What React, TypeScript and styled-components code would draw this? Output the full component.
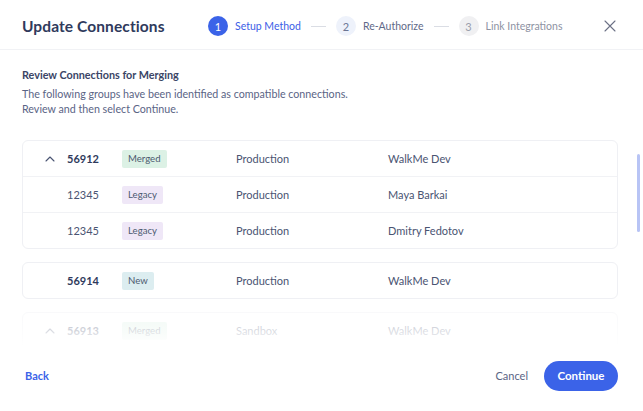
import React from 'react';
import styled, { createGlobalStyle } from 'styled-components';

const GlobalStyle = createGlobalStyle`
  html, body {
    margin: 0;
    padding: 0;
    background: #ffffff;
  }
  body {
    font-family: 'Lato', 'Open Sans', sans-serif;
    -webkit-font-smoothing: antialiased;
  }
`;

const Modal = styled.div`
  width: 643px;
  height: 411px;
  background: #ffffff;
  display: flex;
  flex-direction: column;
  overflow: hidden;
  position: relative;
`;

const Header = styled.header`
  height: 50px;
  padding: 3px 22px 0 22px;
  box-sizing: border-box;
  display: flex;
  align-items: center;
  border-bottom: 1px solid #f1f2f5;
`;

const Title = styled.h1`
  margin: 0;
  font-family: 'Lato', sans-serif;
  font-size: 15.5px;
  font-weight: 700;
  color: #2f3a5c;
  letter-spacing: 0.1px;
  width: 186px;
`;

const Stepper = styled.div`
  display: flex;
  align-items: center;
  flex: 1;
`;

const Step = styled.div`
  display: flex;
  align-items: center;
  gap: 7px;
`;

type StepState = 'active' | 'next' | 'todo';

const StepCircle = styled.span<{ $state: StepState }>`
  width: 20px;
  height: 20px;
  border-radius: 50%;
  display: flex;
  align-items: center;
  justify-content: center;
  font-size: 11px;
  background: ${p =>
    p.$state === 'active' ? '#3b63e8' : p.$state === 'next' ? '#eef2fb' : '#f0f0f2'};
  color: ${p =>
    p.$state === 'active' ? '#ffffff' : p.$state === 'next' ? '#6b7594' : '#9a9eac'};
`;

const StepLabel = styled.span<{ $state: StepState }>`
  font-size: 10.5px;
  color: ${p =>
    p.$state === 'active' ? '#3b5ee6' : p.$state === 'next' ? '#5f6988' : '#8e93a3'};
`;

const StepLine = styled.span`
  width: 15px;
  height: 1px;
  background: #dadde4;
  margin: 0 10px;
`;

const CloseButton = styled.button`
  border: none;
  background: none;
  padding: 0;
  width: 14px;
  height: 14px;
  display: flex;
  align-items: center;
  justify-content: center;
  color: #6b7085;
  margin-right: 4px;
  cursor: pointer;
`;

const Intro = styled.div`
  padding: 18px 22px 0 22px;
`;

const IntroTitle = styled.div`
  font-size: 10.8px;
  line-height: 14px;
  font-weight: 700;
  color: #3a4566;
  margin-bottom: 4px;
`;

const IntroText = styled.p`
  margin: 0;
  font-size: 10.7px;
  line-height: 15px;
  color: #5a6485;
`;

const ScrollArea = styled.div`
  position: relative;
  flex: 1;
  overflow: hidden;
  padding: 24px 25px 0 22px;
  display: flex;
  flex-direction: column;
  gap: 13px;

  &::after {
    content: '';
    position: absolute;
    left: 0;
    right: 0;
    bottom: 0;
    height: 48px;
    background: linear-gradient(
      rgba(255, 255, 255, 0) 0%,
      rgba(255, 255, 255, 0.6) 25%,
      rgba(255, 255, 255, 0.8) 70%,
      #ffffff 100%
    );
    pointer-events: none;
  }
`;

const ScrollThumb = styled.div`
  position: absolute;
  right: 3px;
  top: 38px;
  width: 3px;
  height: 78px;
  border-radius: 2px;
  background: #b8c4f5;
`;

const Group = styled.div`
  border: 1px solid #eff0f4;
  border-radius: 6px;
  flex-shrink: 0;
`;

const Row = styled.div`
  display: grid;
  grid-template-columns: 44px 55px 114px 152px 1fr;
  align-items: center;
  height: 35px;
  & + & {
    border-top: 1px solid #f1f2f5;
  }
`;

const Chevron = styled.span`
  padding-left: 22px;
  display: flex;
  align-items: center;
  color: #4a5472;
`;

const Id = styled.span<{ $bold?: boolean }>`
  font-size: 11px;
  font-weight: ${p => (p.$bold ? 700 : 400)};
  color: ${p => (p.$bold ? '#2f3a5c' : '#4a5472')};
`;

const badgeColors: Record<string, string> = {
  Merged: '#dcf1e5',
  Legacy: '#efe7f7',
  New: '#dcedf0',
};

const Badge = styled.span<{ $kind: string }>`
  justify-self: start;
  height: 18px;
  line-height: 18px;
  padding: 0 6px;
  border-radius: 2px;
  font-size: 9.6px;
  color: #4c5a70;
  background: ${p => badgeColors[p.$kind]};
`;

const Cell = styled.span`
  font-size: 11px;
  color: #4a5472;
`;

const Footer = styled.footer`
  height: 65px;
  flex-shrink: 0;
  display: flex;
  align-items: center;
  padding: 0 25px 6px 25px;
  box-sizing: border-box;
`;

const LinkButton = styled.button<{ $tone: 'primary' | 'muted' }>`
  border: none;
  background: none;
  padding: 0;
  font-family: inherit;
  font-size: 11px;
  font-weight: ${p => (p.$tone === 'primary' ? 700 : 400)};
  color: ${p => (p.$tone === 'primary' ? '#3b63e8' : '#5a6485')};
  cursor: pointer;
`;

const Spacer = styled.div`
  flex: 1;
`;

const PrimaryButton = styled.button`
  border: none;
  margin-left: 16px;
  height: 30px;
  width: 74px;
  border-radius: 15px;
  background: #3b63e8;
  color: #ffffff;
  font-family: inherit;
  font-size: 11.5px;
  font-weight: 700;
  cursor: pointer;
`;

type Conn = { id: string; status: string; env: string; owner: string };
type Item = Conn & { expanded?: boolean; children?: Conn[] };

// the last group is expanded but its members sit below the fold
const groups: Item[] = [
  {
    id: '56912',
    status: 'Merged',
    env: 'Production',
    owner: 'WalkMe Dev',
    expanded: true,
    children: [
      { id: '12345', status: 'Legacy', env: 'Production', owner: 'Maya Barkai' },
      { id: '12345', status: 'Legacy', env: 'Production', owner: 'Dmitry Fedotov' },
    ],
  },
  { id: '56914', status: 'New', env: 'Production', owner: 'WalkMe Dev' },
  { id: '56913', status: 'Merged', env: 'Sandbox', owner: 'WalkMe Dev', expanded: true },
];

const steps: { n: number; label: string; state: StepState }[] = [
  { n: 1, label: 'Setup Method', state: 'active' },
  { n: 2, label: 'Re-Authorize', state: 'next' },
  { n: 3, label: 'Link Integrations', state: 'todo' },
];

function ChevronUp() {
  return (
    <svg width="10" height="6" viewBox="0 0 10 6" fill="none">
      <path d="M1 5L5 1L9 5" stroke="currentColor" strokeWidth="1.1" strokeLinecap="round" strokeLinejoin="round" />
    </svg>
  );
}

export default function App() {
  return (
    <>
      <GlobalStyle />
      <Modal>
        <Header>
          <Title>Update Connections</Title>
          <Stepper>
            {steps.map((s, i) => (
              <React.Fragment key={s.n}>
                {i > 0 && <StepLine />}
                <Step>
                  <StepCircle $state={s.state}>{s.n}</StepCircle>
                  <StepLabel $state={s.state}>{s.label}</StepLabel>
                </Step>
              </React.Fragment>
            ))}
          </Stepper>
          <CloseButton aria-label="Close">
            <svg width="12" height="12" viewBox="0 0 12 12" fill="none">
              <path d="M1 1L11 11M11 1L1 11" stroke="currentColor" strokeWidth="1.1" strokeLinecap="round" />
            </svg>
          </CloseButton>
        </Header>
        <Intro>
          <IntroTitle>Review Connections for Merging</IntroTitle>
          <IntroText>
            The following groups have been identified as compatible connections.
            <br />
            Review and then select Continue.
          </IntroText>
        </Intro>
        <ScrollArea>
          {groups.map(g => (
            <Group key={g.id}>
              <Row>
                <Chevron>{g.expanded ? <ChevronUp /> : null}</Chevron>
                <Id $bold>{g.id}</Id>
                <Badge $kind={g.status}>{g.status}</Badge>
                <Cell>{g.env}</Cell>
                <Cell>{g.owner}</Cell>
              </Row>
              {g.children?.map((c, i) => (
                <Row key={i}>
                  <span />
                  <Id>{c.id}</Id>
                  <Badge $kind={c.status}>{c.status}</Badge>
                  <Cell>{c.env}</Cell>
                  <Cell>{c.owner}</Cell>
                </Row>
              ))}
            </Group>
          ))}
          <ScrollThumb />
        </ScrollArea>
        <Footer>
          <LinkButton $tone="primary">Back</LinkButton>
          <Spacer />
          <LinkButton $tone="muted">Cancel</LinkButton>
          <PrimaryButton>Continue</PrimaryButton>
        </Footer>
      </Modal>
    </>
  );
}
